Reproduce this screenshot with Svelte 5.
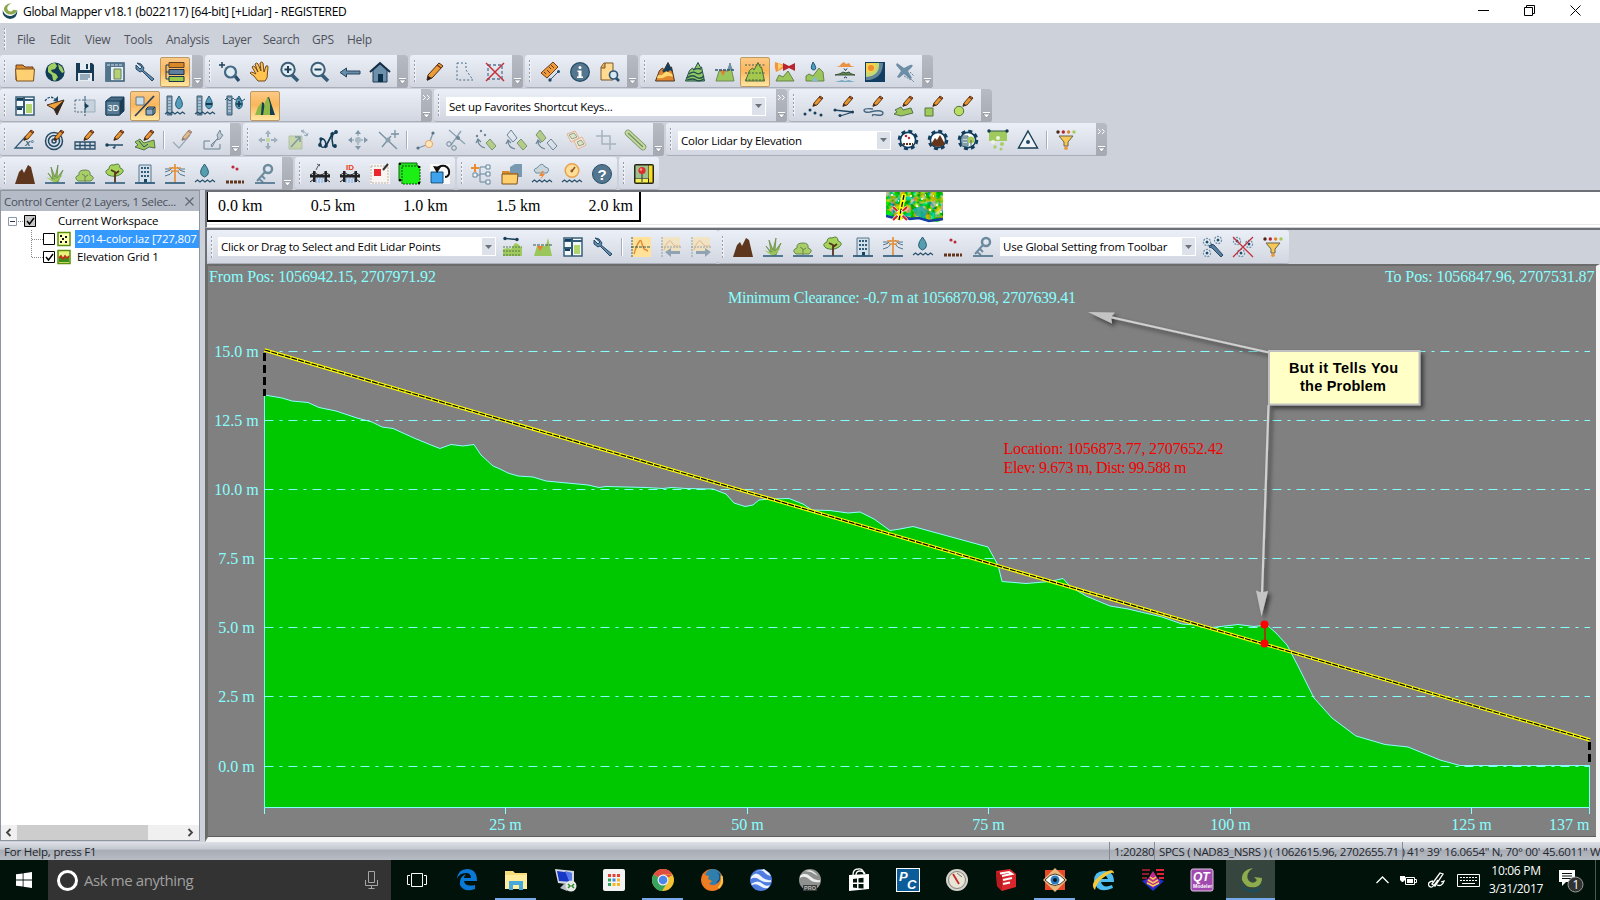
<script lang="ts">
	const pencil =
		'<path d="M9 10l1-3 6-7 3 2-6 7z" fill="#e9962f" stroke="#4b2a14" stroke-width=".9"/><path d="M8.5 11l1.2-3.6 2.6 1.8z" fill="#4b2a14"/><path d="M15 1l3 2.2" stroke="#7c2f1c" stroke-width="1.2"/>';
	const gear =
		'<circle cx="10" cy="10" r="9" fill="none" stroke="#123f5e" stroke-width="2.6" stroke-dasharray="4 3.07"/><circle cx="10" cy="10" r="7.6" fill="#fff" stroke="#123f5e" stroke-width="1.6"/>';
	const bridge =
		'<path d="M6 14h8M5 16h10M5 18h11" stroke="#79aee8" stroke-dasharray="2 1"/><path d="M0 11h20v2.500H0zM3 7h2.500v11H3zM14.500 7H17v11h-2.500z" fill="#222"/><path d="M0 11q3-1 4-3 6 6 12 0 1 2 4 3M0 18l4-3M20 18l-4-3" fill="none" stroke="#222"/>';
	const funnel =
		'<circle cx="2" cy="2" r="1.7" fill="#4b2413"/><circle cx="7.3" cy="2" r="1.7" fill="#b22430"/><circle cx="12.6" cy="2" r="1.7" fill="#e0842c"/><circle cx="18" cy="2" r="1.7" fill="#a6cb53"/><path d="M3 6h14l-5 6v4H8v-4z" fill="#f6c856" stroke="#6d6248"/><circle cx="10" cy="18.3" r="1.8" fill="#ee9536"/>';
	const waves = '<path d="M0 18l2.5-2 2.5 2 2.5-2 2.5 2 2.5-2 2.5 2 2.5-2 2.5 2" fill="none" stroke="#28506c" stroke-width="1.2"/>';
	const ruler = '<path d="M2 0h5v19H2z" fill="#7392a9" stroke="#436379"/><path d="M3 3h3M3 6h3M3 9h3M3 12h3M3 15h3" stroke="#e3edf3"/>';
	const ridge = 'M.500 19L4.500 8.500l3-2.500 1.500 2L13 .500l2.500 5 1-.500L19.500 19z';
	const green = 'fill="#9cc65b" stroke="#56734b"';

	const icons: Record<string, string> = {
		folder: '<path d="M1 3h7l2 2h8v13H1z" fill="#d98a2c" stroke="#6b3d1b"/><path d="M.500 7h19l-1 12h-17z" fill="#ffd071" stroke="#7b5222"/>',
		globe: '<circle cx="10" cy="10" r="9.6" fill="#123b57"/><path d="M3 5q3-4 7-4l2 3-2 3-4 1 1 2 4 2 2 3-3 4-2-1-1-5-4-3zM13 2l4 3 2 5-2 1-3-4z" fill="#a0cf62"/>',
		save: '<path d="M1 1h16l2 2v16H1z" fill="#173b55"/><path d="M5 1h10v7H5zM3 11h14v8H3z" fill="#e6edf2"/><path d="M11 2h2v5h-2z" fill="#173b55"/><path d="M5 13h10M5 15h10M5 17h8" stroke="#456982"/>',
		layout: '<path d="M1 1h18v18H1z" fill="#e9eef2" stroke="#335a75" stroke-width="1.5"/><path d="M1 1h18v4H1zM1 5h5v14H1z" fill="#52758e"/><path d="M2 3h15" stroke="#d9e4eb" stroke-dasharray="3 1"/><path d="M9 7h7v10H9z" fill="#b4d174" stroke="#64806b"/>',
		wrench: '<path d="M2 1l4 1 3 4-1 2 11 9-2 2L7 9 5 10 1 7V3l4 4 2-2z" fill="#638cad" stroke="#244866"/>',
		layers: '<path d="M4 3H1v14h4M1 10h4" fill="none" stroke="#173b56"/><path d="M4 .500h15v5H4z" fill="#d98828" stroke="#624126"/><path d="M4 7.500h15v5H4z" fill="#617f9d" stroke="#17354d"/><path d="M4 14.500h15v5H4z" fill="#9acb4e" stroke="#17354d"/>',
		zoomWin: '<path d="M2 0v6M-1 3h6" stroke="#1b3e56" stroke-width="1.4"/><path d="M15 14l4 5" stroke="#294e6d" stroke-width="3.4"/><circle cx="10.5" cy="10" r="5.5" fill="#dfecf3" stroke="#436983" stroke-width="2.2"/>',
		hand: '<path d="M8 19L4 14 0 11q1-2 4 0l2 1-4-7q1-2 3 0l3 5L5 2q2-2 3 0l3 7-1-8q2-2 3 0l1 9 2-6q2-1 2 1l-1 11-2 3z" fill="#ffc34e" stroke="#704a23"/>',
		zoomIn: '<path d="M12 13l6 6" stroke="#355d7a" stroke-width="3.5"/><circle cx="8" cy="7.5" r="6.7" fill="#e5eef3" stroke="#3d6078" stroke-width="2"/><path d="M4.5 7.5h7M8 4v7" stroke="#1c4059" stroke-width="2"/>',
		zoomOut: '<path d="M12 13l6 6" stroke="#355d7a" stroke-width="3.5"/><circle cx="8" cy="7.5" r="6.7" fill="#e5eef3" stroke="#3d6078" stroke-width="2"/><path d="M4.5 7.5h7" stroke="#1c4059" stroke-width="2"/>',
		back: '<path d="M0 10.500l6.500-4.500v3H20v3H6.500v3z" fill="#668eaa" stroke="#29475e"/>',
		home: '<path d="M3 8l7-6 7 6v12H3z" fill="#6d91ac" stroke="#213d54"/><path d="M0 10l10-9 10 9" fill="none" stroke="#162f46" stroke-width="2"/><path d="M8 12h5v8H8z" fill="#0c3048"/>',
		pencil: '<path d="M2 18l1-5L14 1l4 3L7 16z" fill="#eb9c35" stroke="#4b2a14"/><path d="M2 19l1-5 4 2z" fill="#2d2018"/><path d="M12 3l4 3" stroke="#7c2f1c" stroke-width="1.4"/>',
		selShape: '<path d="M2 1h9v7l7 10H2z" fill="none" stroke="#476b88" stroke-dasharray="2 2"/>',
		selDel: '<path d="M3 3h14v14H3z" fill="none" stroke="#547690" stroke-width="1.300" stroke-dasharray="3 2"/><path d="M1 1l18 18M19 1L1 19" stroke="#c4303c" stroke-width="1.500"/>',
		measure: '<path d="M1 11L13 0l5 5L7 16z" fill="#f09b38" stroke="#683d1d"/><path d="M4 10l2 2M7 8l3 3M9 5l2 2M11 3l3 3" stroke="#5e371d"/><path d="M10 18l9-9" stroke="#315878"/><circle cx="10" cy="18" r="1.7" fill="#244b6b"/><circle cx="18.5" cy="9.5" r="1.5" fill="#244b6b"/>',
		info: '<circle cx="10" cy="10" r="9.3" fill="#54778f" stroke="#254c68" stroke-width="1.3"/><circle cx="10" cy="5.4" r="1.5" fill="#fff"/><path d="M7.5 8.5h4v6h1.5v1.5H7V14.500h1.500V10h-1z" fill="#fff"/>',
		docFind: '<path d="M4 1h9v17H1V5z" fill="#ffda91" stroke="#7b562b"/><path d="M5 1v5H1" fill="#e5a64e" stroke="#7b562b"/><path d="M15 15l4 4" stroke="#294f70" stroke-width="2.6"/><circle cx="13.500" cy="13" r="4" fill="#d8e9f3" stroke="#315878" stroke-width="1.700"/>',
		mtnColor: `<path d="${ridge}" fill="#e0872e" stroke="#4d3524"/><path d="M7 8.500L9 8l4-7.500 2.500 5 1-.500 1 5-2.500-2-2 2-2-1-2 2z" fill="#163e59"/><path d="M3 13q4 1 6-2t8 1l1 3q-5-2-8 0t-8 1z" fill="#ffd66e"/>`,
		mtnContour: `<path d="${ridge}" fill="#91c668" stroke="#204f49"/><path d="M2 16q5-4 9-1t8-1M4 12q4-3 7-1t6-1M8 8q4-2 8-1M2 18q6-2 9 0t8-1" fill="none" stroke="#204f49" stroke-width="1.300"/>`,
		mtnCut: '<path d="M1 19L4 9h9l2-8 4 18z" fill="#9bc65b" stroke="#6f8b5b"/><path d="M12 8l3-7 3 7z" fill="#7192a7"/><path d="M5 8h6l-3 6z" fill="#e17f36"/><path d="M0 8h20" stroke="#2b536e" stroke-width="1.300" stroke-dasharray="3 1"/>',
		mtnProfile: `<path d="${ridge}" fill="#a4c84c" stroke="#486d3b"/><path d="M0 3h20M0 11h20M0 18h20" stroke="#405e4c" stroke-dasharray="2 1.500"/>`,
		viewshed: '<path d="M0 0l9 3v3L1 10q-2-5-1-10z" fill="#f39538"/><path d="M3 1l5 3-5 4z" fill="#ffd371"/><path d="M8 1l6 3 6-3v8l-6-3-6 3z" fill="#b82531"/><path d="M1 19l3-6 4 2 5-6 6 10z" fill="#9cc65b" stroke="#65854a"/>',
		watershed: '<path d="M8 0q5 7 1 8-5 0-1-8z" fill="#4b9bbf" stroke="#255a78"/><path d="M1 19v-5l3-2 4 2 6-8 4 4 1 9z" fill="#9cc65b" stroke="#65854a"/><path d="M7 19l2-4 3 2 1 2z" fill="#82bcd6"/>',
		surfaces: '<path d="M0 5q5 0 6-3l3-2 2 2 3-1 2 3 4 1z" fill="#eb9242"/><path d="M0 13q6-1 8-3l3 1 3-1q1 2 6 3z" fill="#65884d" stroke="#38523d"/><path d="M0 20q4-1 7-2l3 1 4-1q2 1 6 2z" fill="#78a9c0"/><path d="M9 6.500l1.500 2 1.500-2M9 16l1.500-1 1.500 1" fill="none" stroke="#16374e"/>',
		heat: '<path d="M0 0h20v20H0z" fill="#113e62"/><path d="M1 1h17q0 14-13 17H1z" fill="#638599"/><path d="M1 1h13q1 13-13 14z" fill="#c4da72"/><path d="M1 1h9q3 10-9 10z" fill="#f6d34f"/><circle cx="6" cy="6" r="3" fill="#f08b2e"/>',
		plane: '<path d="M2 1l7 5 6-3q4-1 2 2l-4 4 4 7-2 1-6-5-5 4-2-1 4-6-5-6z" fill="#6c8ea6"/><path d="M11 12l8 8M9 14l7 4M15 10l4 4" stroke="#647f93" stroke-dasharray="2 1"/>',
		panels: '<path d="M1 1h18v18H1z" fill="#f3f7fa" stroke="#395f77" stroke-width="1.500"/><path d="M1 4h18M9 1v18M1 11h8" stroke="#315b77" stroke-width="2"/><path d="M11 8h6v9h-6z" fill="#b2d66d"/><path d="M2 2h6v2H2zM2 12h5v2H2z" fill="#153e59"/>',
		flyTo: '<path d="M2 9L19 4l-7 15-3-6z" fill="#f1a33c" stroke="#4b301d"/><path d="M19 4L9 13l3 6z" fill="#322923"/><path d="M0 5q5-7 11-1" fill="none" stroke="#234e6e" stroke-width="1.300" stroke-dasharray="2.500 1.200"/><path d="M8 5l5 1V0z" fill="#234e6e"/>',
		mirror: '<path d="M0 4h10v12H0z" fill="none" stroke="#496b80" stroke-dasharray="2 1.500"/><path d="M10 4h10v12H10z" fill="#c6d3dd" stroke="#9bafbd"/><path d="M10 0v20" stroke="#315b77" stroke-dasharray="5 1"/><path d="M10 7l4 3-4 3z" fill="#173f5b"/>',
		cube3d: '<path d="M1 5l5-4h13v14l-5 4H1z" fill="#466a84" stroke="#143d59"/><path d="M1 5h14v14H1z" fill="#587b93" stroke="#143d59"/><path d="M15 5l4-4v14l-4 4z" fill="#193e57"/><text x="2.500" y="15" font-family="Liberation Sans" font-size="9" fill="#fff">3D</text>',
		switch3d: '<path d="M1 1h8v8H1z" fill="#c9dcea" stroke="#6a7880"/><path d="M19 0L0 20" stroke="#2c435a" stroke-width="1.800"/><path d="M11 13l2-2h7v6l-2 2h-7z" fill="#8fabc1" stroke="#173b55"/><path d="M11 13h7v6M18 13l2-2" fill="none" stroke="#173b55"/>',
		waterSet: ruler + waves + '<path d="M14 0q7 10 0 13-7-3 0-13z" fill="#559cba" stroke="#265d7a"/>',
		waterDown: ruler + waves + '<path d="M14 0q7 10 0 13-7-3 0-13z" fill="#559cba" stroke="#265d7a"/><path d="M11 8h6" stroke="#15364d" stroke-width="2"/>',
		waterUp: ruler + '<path d="M14 0q7 10 0 13-7-3 0-13z" fill="#559cba" stroke="#265d7a"/><path d="M11 8h6M14 5v6" stroke="#15364d" stroke-width="1.600"/><path d="M0 4l2-2 3 3 3-3 2 2 3-2 4 3 3-2" fill="none" stroke="#315b77"/>',
		peaks: '<path d="M4 19L7 6l2 1 3 12zM11 19l1-17 2-1 6 18z" fill="#173e50"/><path d="M0 19l3-8 4-5-1 13zM8 19l2-13 3-5 2 7v11z" fill="#8fb945"/>',
		angle: '<path d="M18 18H0L11 6" fill="none" stroke="#315b77" stroke-width="1.300"/><text x="10" y="16" font-family="Liberation Sans" font-style="italic" font-weight="bold" font-size="8" fill="#315b77">X°</text>' + pencil,
		target: '<g fill="none" stroke="#234a64" stroke-width="1.500"><circle cx="9" cy="11" r="8.500"/><circle cx="9" cy="11" r="5.500"/><circle cx="9" cy="11" r="2"/></g>' + pencil,
		gridDraw: '<path d="M0 12h20v7H0zM0 15.500h20M5 12v7M10 12v7M15 12v7" fill="none" stroke="#294f69" stroke-width="1.300"/>' + pencil,
		segDraw: '<path d="M1 15h17M10 15q0 5-2 2" fill="none" stroke="#294f69" stroke-width="1.400"/><circle cx="2" cy="15" r="1.700" fill="#143c58"/>' + pencil,
		areaMap: `<path d="M0 12l5-3 4 4 10-3 1 8-6-1-5 3-9-3 3-2z" ${green}/><path d="M4 11l5 6 4-3" fill="none" stroke="#28506c"/>` + pencil,
		checkDraw: '<path d="M0 12l6 6 11-13" fill="none" stroke="#6b8190" stroke-width="1.300"/>' + pencil,
		wrenchBox: '<path d="M7 11H1v8h16v-5" fill="none" stroke="#6d8291"/><path d="M8 15l7-7-1-3 3-5 1 4 2 1-3 4-4 1-4 7z" fill="#c1cbd3" stroke="#748b9c"/>',
		move: '<path d="M10 0l3 4h-2v3H9V4H7zM10 20l3-4h-2v-3H9v3H7zM0 10l4-3v2h3v2H4v2zM20 10l-4-3v2h-3v2h3v2z" fill="#6e879a"/><path d="M8 8h4v4H8z" fill="#b6cf70"/>',
		scale: '<path d="M1 6h13v13H1z" fill="#b5ce78" stroke="#92a878"/><path d="M3 17L12 7m-5 0h5v5" fill="none" stroke="#34596d" stroke-width="1.500"/><path d="M13 1q5 0 6 5l-3-1m3 1l1-3M13 1l3-1m-3 1l3 2" fill="none" stroke="#587488"/>',
		vertices: '<path d="M2 15l1-6q4-1 5 5l-1 4 8-16-1 7 1 7 3 1" fill="none" stroke="#173e56" stroke-width="1.600"/><path d="M2 15q2 4 6 1l6-11 5-3" fill="none" stroke="#173e56" stroke-width="1.300"/><g fill="#123b57"><circle cx="2" cy="15" r="1.900"/><circle cx="3" cy="9" r="1.700"/><circle cx="8" cy="16" r="1.800"/><circle cx="14" cy="4" r="1.700"/><circle cx="18" cy="2" r="1.900"/><circle cx="17" cy="16" r="1.900"/></g>',
		moveVertex: '<path d="M10 0l3 4H7zM10 20l3-4H7zM0 10l4-3v6zM20 10l-4-3v6z" fill="#7f97a8"/><path d="M10 4v12M4 10h12" stroke="#7f97a8" stroke-dasharray="2 1"/><circle cx="10" cy="10" r="3" fill="#a9bac6"/>',
		addVertex: '<path d="M1 2l18 17M4 17l9-11M17 0v8M13 4h8" fill="none" stroke="#7890a1" stroke-width="1.300"/><circle cx="10" cy="10" r="2.500" fill="#8ba1b0"/>',
		nodeA: '<path d="M2 18l11-4 4-11" fill="none" stroke="#839aaa" stroke-width="1.300"/><circle cx="2" cy="18" r="1.600" fill="#56758b"/><circle cx="17" cy="3" r="1.600" fill="#56758b"/><circle cx="13" cy="14" r="3.600" fill="#ffe6bc" stroke="#e8a861"/>',
		cut: '<path d="M3 0l16 14M15 1L5 15" stroke="#8da2b0" stroke-width="1.300"/><circle cx="3" cy="14" r="2.300" fill="none" stroke="#6d8798"/><circle cx="8" cy="18" r="2.300" fill="none" stroke="#6d8798"/><circle cx="12" cy="8" r="2" fill="#6d8798"/>',
		rotA: '<circle cx="5" cy="1" r="1.200" fill="#69859a"/><circle cx="1" cy="6" r="1.200" fill="#69859a"/><circle cx="9" cy="5" r="1.200" fill="#69859a"/><path d="M10 13l4-4 6 7-4 4z" fill="#b3cd88" stroke="#7c946f"/><path d="M2 10q0 6 7 8M0 13l2-4 3 3" fill="none" stroke="#6d8798" stroke-width="1.300"/>',
		rotB: '<path d="M1 5l4-5 6 8-4 4z" fill="none" stroke="#69859a"/><path d="M11 13l4-4 6 7-4 4z" fill="#b3cd88" stroke="#7c946f"/><path d="M2 11q0 6 7 8M0 14l2-4 3 3" fill="none" stroke="#6d8798" stroke-width="1.300"/>',
		rotC: '<path d="M0 5l4-5 6 8-4 4z" fill="#b3cd88" stroke="#7c946f"/><path d="M11 13l4-4 6 7-4 4z" fill="none" stroke="#69859a"/><path d="M2 11q0 6 7 8M0 14l2-4 3 3" fill="none" stroke="#6d8798" stroke-width="1.300"/>',
		copyShapes: '<path d="M1 4l8-3 4 7-8 4zM8 11l8-4 4 8-8 4z" fill="#f5e8df" stroke="#e4b391"/><path d="M3 5l5-2 3 4-5 2zM11 12l4-2 3 4-5 2z" fill="#dce5cb" stroke="#8ca284"/>',
		crop: '<path d="M6 0v14h14M0 6h14v14" fill="none" stroke="#a7b4bf" stroke-width="1.500"/>',
		rod: '<path d="M2 3l15 14" stroke="#81966d" stroke-width="6.500" stroke-linecap="round"/><path d="M2 3l15 14" stroke="#c4dca0" stroke-width="5" stroke-linecap="round"/><path d="M2 3l15 14" stroke="#7a9362" stroke-width="1.500"/>',
		pointsDraw: '<circle cx="1" cy="18" r="1.500" fill="#173d57"/><circle cx="6" cy="14" r="1.500" fill="#173d57"/><circle cx="11" cy="17" r="1.500" fill="#173d57"/><circle cx="17" cy="19" r="1.500" fill="#173d57"/>' + pencil,
		lineDraw: '<path d="M0 14l19 2L6 20" fill="none" stroke="#214865" stroke-width="1.300"/><circle cx="1" cy="14" r="1.500" fill="#173d57"/><circle cx="6" cy="19.500" r="1.500" fill="#173d57"/><circle cx="18.500" cy="16" r="1.500" fill="#173d57"/>' + pencil,
		freeDraw: '<path d="M9 13q-8-1-9 1 0 3 6 2 12-3 13 1 0 3-6 2-6-1-4 1" fill="none" stroke="#476982" stroke-width="1.400"/>' + pencil,
		areaDraw: `<path d="M1 14l6-3 2 3 8-2 2 5-12 3-7-2 3-2z" ${green}/>` + pencil,
		rectDraw: '<path d="M1 12h8v8H1z" fill="#9ecb5b" stroke="#567445"/>' + pencil,
		circleDraw: '<circle cx="5" cy="15" r="4.700" fill="#b9de62" stroke="#51743f"/>' + pencil,
		gearDots: gear + '<circle cx="8" cy="6" r="1.300" fill="#b92836"/><circle cx="11" cy="8" r="1.200" fill="#b92836"/><path d="M5 14h10" stroke="#643018" stroke-width="2" stroke-dasharray="2 1"/>',
		gearMtn: gear + '<path d="M3 14l4-6 2 2 3-5 5 9q-7 6-14 0z" fill="#64351b"/>',
		gearCity: gear + '<path d="M4 6h6v10H4z" fill="#c5d7e2" stroke="#456b7d"/><circle cx="13" cy="10" r="3.500" fill="#a9cc59"/><path d="M13 10v6M5 8h4M5 11h4M5 14h4" stroke="#47636d"/>',
		gridPts: '<path d="M1 1h18v10H1z" fill="#9fca5e"/><path d="M1 1h18" stroke="#315944"/><circle cx="1" cy="1" r="1.700" fill="#143c4d"/><circle cx="19" cy="1" r="1.700" fill="#143c4d"/><circle cx="5" cy="12" r="2" fill="#eff5dd"/><circle cx="10" cy="8" r="2" fill="#eff5dd"/><circle cx="7" cy="17" r="1.700" fill="#a8cd6a"/><circle cx="14" cy="14" r="2" fill="#a8cd6a"/><circle cx="13" cy="19" r="1.500" fill="#a8cd6a"/>',
		tri: '<path d="M10 1l9.500 17H.5z" fill="#edf3f7" stroke="#173d57" stroke-width="1.400"/><circle cx="10" cy="12" r="2" fill="#204966"/>',
		funnel,
		ground: '<path d="M0 20L4 8l3-3 2 4 4-8 3 2 4 17z" fill="#5e351d"/>',
		grass: '<path d="M9 18L3 9l5 6L6 3l4 10 3-12-1 13 6-8-5 12z" fill="#8dbb50" stroke="#60853f" stroke-width=".7"/><path d="M8 18l-7-5 8 3 9-5-7 7z" fill="#9bc65d"/><path d="M0 19h20" stroke="#315f7c" stroke-width="1.600"/>',
		bush: '<path d="M3 17q-5-4 1-6-1-5 6-5 6 0 5 5 6 2 1 6z" fill="#a9cd67" stroke="#66894f"/><path d="M10 18v-6l-3-2m3 3l3-2" stroke="#69864f" fill="none"/><path d="M0 19h20" stroke="#315f7c" stroke-width="1.600"/>',
		tree: '<path d="M3 11q-5-4 1-6 0-5 5-4 6-3 6 3 6 2 1 6-6 4-13 1z" fill="#a6d45a" stroke="#557f43"/><path d="M10 19V8l-4-2m4 4l4-3" stroke="#54331e" stroke-width="1.800" fill="none"/><path d="M0 19h20" stroke="#315f7c" stroke-width="1.600"/>',
		building: '<path d="M4 1h12v18H4z" fill="#d4e1ea" stroke="#57768c"/><path d="M6 4h8M6 8h8M6 12h8" stroke="#355c77" stroke-width="2" stroke-dasharray="2 1"/><path d="M9 15h3v4H9z" fill="#164562"/><path d="M0 19h20" stroke="#315f7c" stroke-width="1.800"/>',
		pole: '<path d="M0 8q6-1 8-5M20 8q-6-1-8-5M0 12q6-1 8-5M20 12q-6-1-8-5M0 5h6M14 5h6" fill="none" stroke="#51798e"/><path d="M10 0v19M4 4h12M6 7h8" stroke="#e59138" stroke-width="1.700"/><path d="M0 19h20" stroke="#315f7c" stroke-width="1.700"/>',
		drop: waves + '<path d="M9.500 0q8 10 0 13-8-3 0-13z" fill="#589dae" stroke="#286277"/>',
		dots: '<circle cx="8" cy="3" r="1.600" fill="#bc2937"/><circle cx="12" cy="5" r="1.500" fill="#bc2937"/><path d="M1 18h18" stroke="#62351f" stroke-width="2.800" stroke-dasharray="3 1"/>',
		key: '<circle cx="13" cy="5" r="4" fill="none" stroke="#6c8b9f" stroke-width="2.500"/><path d="M10 8l-8 9m2-2l4 3m-1-6l3 3" stroke="#6c8b9f" stroke-width="2" fill="none"/><path d="M0 19h20" stroke="#315f7c" stroke-width="1.400"/>',
		bridgeEdit: bridge + '<path d="M6 6l2-4 2-2M7 0l3 2" stroke="#555" fill="none"/>',
		bridgeId: bridge + '<text x="6" y="6" font-family="Liberation Sans" font-weight="bold" font-size="8" fill="#e83c1b">ID</text>',
		redSel: '<path d="M0 0h20v20H0z" fill="#f7f4f1"/><path d="M1 2h17v17H1z" fill="none" stroke="#b8b1a8" stroke-dasharray="2 1"/><path d="M4 5h7v7H4z" fill="#e8272f"/><path d="M13 6l5-6" stroke="#333" stroke-width="2"/>',
		greenSel: '<path d="M-1-1h18v18H-1z" fill="#22e61c" stroke="#0a640a"/><path d="M2 2h18v18H2z" fill="#1bef14" stroke="#174a14" stroke-dasharray="2 1"/><path d="M-1-1h2v2h-2zM18 2h2v2h-2zM-1 15h2v2h-2zM18 18h2v2h-2z" fill="#000"/>',
		undoBlue: '<path d="M0 0h20v20H0z" fill="#fafafa"/><path d="M1 8h12v11H1z" fill="#3ea2ed" stroke="#124c76"/><path d="M6 6q3-5 9-4 5 2 4 8-1 3-4 3" fill="none" stroke="#111" stroke-width="2"/><path d="M3 2l8 1-4 6z" fill="#111"/>',
		tree3: '<path d="M3 0v8M-1 4h8" stroke="#ec8b30" stroke-width="2"/><path d="M3 11h5M8 3h8M8 10h8M8 18h8M8 3v15" stroke="#66859b" fill="none"/><path d="M14 1h4v4h-4zM14 8h4v4h-4zM14 16h4v4h-4zM1 9h4v4H1z" fill="#eef4f8" stroke="#66859b"/>',
		folders: '<path d="M8 3l5-3h7v13H8z" fill="#7899b0"/><path d="M0 7h7l2 2h6v11H0z" fill="#d98a2c"/><path d="M0 10h16l-1 10H0z" fill="#ffce6d" stroke="#7b5222"/>',
		storm: '<path d="M4 9q-4-4 1-5 5-7 8-1 6 1 2 6z" fill="#c9d5dc" stroke="#6f8e9f"/><path d="M10 7l-3 5h3l-2 4 5-6h-3l2-3z" fill="#ed8937"/>' + waves,
		gauge: '<circle cx="10" cy="6.500" r="6.800" fill="#ffdf98" stroke="#e8a14d" stroke-width="1.500"/><path d="M10 7l3-4" stroke="#8b572b" stroke-width="1.500"/><circle cx="9.800" cy="7" r="1.400" fill="#8b572b"/>' + waves,
		help: '<circle cx="10" cy="10" r="9.500" fill="#53758d" stroke="#284f6b"/><text x="5.500" y="15.500" font-family="Liberation Sans" font-weight="bold" font-size="15" fill="#fff">?</text>',
		pin: '<rect width="20" height="20" rx="2" fill="#272713"/><path d="M1.500 1.500h13v13h-13z" fill="#9ec08f"/><path d="M15 1.500h3.500v17H15z" fill="#f5dc22"/><path d="M1.500 15H14v3.500H1.500z" fill="#f3ef55"/><path d="M8 9v9" stroke="#333"/><circle cx="8" cy="6.500" r="3.600" fill="#dc2e2b"/><circle cx="7" cy="5.500" r="1.200" fill="#ff9b8e"/>',
		pathProfile: '<path d="M0 19V12l5-1 3 1 4-6 3 1 4 4v8z" fill="#a0ca5b"/><path d="M0 10h19M0 14h18M0 18h18" stroke="#53764d" stroke-dasharray="2 1"/><path d="M2 1.500l12 1" stroke="#173d57" stroke-width="1.300"/><circle cx="2" cy="1.500" r="1.700" fill="#173d57"/><circle cx="14" cy="2.500" r="1.700" fill="#173d57"/>',
		cutSmall: '<path d="M1 19L4 9h9l2-8 4 18z" fill="#9bc65b"/><path d="M4 9h6l-3 5z" fill="#e68131"/><path d="M0 8h20" stroke="#36594d" stroke-dasharray="3 1"/>',
		graph: '<path d="M1 0h19v20H1z" fill="#ffe19a"/><path d="M1 0v20" stroke="#48626a" stroke-dasharray="2 1"/><path d="M3 17q3-10 5-12 2-4 3 2l2 5 4 2" fill="none" stroke="#e28a32" stroke-width="1.400"/><path d="M0 10h20" stroke="#36594d" stroke-dasharray="3 1"/>',
		graphPrev: '<g opacity=".5"><path d="M1 0h18v14H1z" fill="#ffe19a"/><path d="M1 0v20M0 10h20" stroke="#48626a" stroke-dasharray="2 1"/><path d="M3 13q5-14 8-7l3 3h5" fill="none" stroke="#e28a32"/></g><path d="M4 15l6-4v3h9v3h-9v3z" fill="#91a3b2"/>',
		graphNext: '<g opacity=".5"><path d="M1 0h18v14H1z" fill="#ffe19a"/><path d="M1 0v20M0 10h20" stroke="#48626a" stroke-dasharray="2 1"/><path d="M3 13q5-14 8-7l3 3h5" fill="none" stroke="#e28a32"/></g><path d="M20 15l-6-4v3H5v3h9v3z" fill="#91a3b2"/>',
		gearsFix: '<g fill="#eef4f8" stroke="#6f8fa8" stroke-width="1.300" stroke-dasharray="2 1"><circle cx="4" cy="5" r="3.500"/><circle cx="15" cy="3" r="3.500"/><circle cx="4" cy="16" r="3.500"/></g><circle cx="4" cy="5" r="1.500" fill="#204c70"/><circle cx="15" cy="3" r="1.500" fill="#204c70"/><circle cx="4" cy="16" r="1.500" fill="#204c70"/><path d="M8 7l3 1 9 10-2 2-9-9-3-1 1-2 2 1z" fill="#58809e" stroke="#254b69"/>',
		gearsDel: '<g fill="#eef4f8" stroke="#6f8fa8" stroke-width="1.300" stroke-dasharray="2 1"><circle cx="4" cy="4" r="3.500"/><circle cx="16" cy="7" r="3.500"/><circle cx="8" cy="16" r="3.500"/></g><circle cx="4" cy="4" r="1.500" fill="#204c70"/><circle cx="16" cy="7" r="1.500" fill="#204c70"/><circle cx="8" cy="16" r="1.500" fill="#204c70"/><path d="M0 0l20 20M20 0L0 20" stroke="#c22f3d" stroke-width="1.300"/>'
	};

	const lidarClasses = ['ground', 'grass', 'bush', 'tree', 'building', 'pole', 'drop', 'dots', 'key'];

	type Group = {
		items: string[];
		on?: string[];
		combo?: string;
		comboWidth?: number;
		width?: number;
		end?: 'more' | 'both' | 'none';
	};

	const rows: Group[][] = [
		[
			{ items: ['folder', 'globe', 'save', 'layout', 'wrench', 'layers'], on: ['layers'] },
			{ items: ['zoomWin', 'hand', 'zoomIn', 'zoomOut', 'back', 'home'] },
			{ items: ['pencil', 'selShape', 'selDel'] },
			{ items: ['measure', 'info', 'docFind'] },
			{
				items: ['mtnColor', 'mtnContour', 'mtnCut', 'mtnProfile', 'viewshed', 'watershed', 'surfaces', 'heat', 'plane'],
				on: ['mtnProfile']
			}
		],
		[
			{
				items: ['panels', 'flyTo', 'mirror', 'cube3d', 'switch3d', 'waterSet', 'waterDown', 'waterUp', 'peaks'],
				on: ['switch3d', 'peaks'],
				width: 432,
				end: 'both'
			},
			{ items: [], combo: 'Set up Favorites Shortcut Keys...', comboWidth: 320, width: 353, end: 'both' },
			{ items: ['pointsDraw', 'lineDraw', 'freeDraw', 'areaDraw', 'rectDraw', 'circleDraw'] }
		],
		[
			{ items: ['angle', 'target', 'gridDraw', 'segDraw', 'areaMap', '|', '~checkDraw', 'wrenchBox'] },
			{
				items: ['~move', '~scale', 'vertices', 'moveVertex', 'addVertex', '|', 'nodeA', 'cut', 'rotA', 'rotB', 'rotC', 'copyShapes', 'crop', 'rod']
			},
			{
				items: ['gearDots', 'gearMtn', 'gearCity', 'gridPts', 'tri', '|', 'funnel'],
				combo: 'Color Lidar by Elevation',
				comboWidth: 213,
				width: 441,
				end: 'both'
			}
		],
		[
			{ items: lidarClasses },
			{ items: ['bridgeEdit', 'bridgeId', 'redSel', 'greenSel', 'undoBlue'], end: 'none' },
			{ items: ['tree3', 'folders', 'storm', 'gauge', 'help'], end: 'none' },
			{ items: ['pin'], end: 'none' }
		]
	];

	const menus = ['File', 'Edit', 'View', 'Tools', 'Analysis', 'Layer', 'Search', 'GPS', 'Help'];

	const levels = [
		{ y: 351.5, label: '15.0 m' },
		{ y: 420.5, label: '12.5 m' },
		{ y: 489.5, label: '10.0 m' },
		{ y: 558.5, label: '7.5 m' },
		{ y: 627.5, label: '5.0 m' },
		{ y: 696.5, label: '2.5 m' },
		{ y: 766.5, label: '0.0 m' }
	];
	const ticks = [
		{ x: 505.5, label: '25 m' },
		{ x: 747.5, label: '50 m' },
		{ x: 988.5, label: '75 m' },
		{ x: 1230.5, label: '100 m' },
		{ x: 1471.5, label: '125 m' }
	];
	const terrain =
		'264.5,395 282,398 292,401 308,402.500 319,407.500 336,411 357,418 372,422 382,427 393,428.500 414,438 431,445 440,448.500 451,444.500 463,446 474,444.500 481,455 493,466 500,469 508,473 518,476 533,477 546,481 567,483 588,485 599,487.500 606,486.500 646,487.500 663,488.500 671,487.500 686,488.500 713,489 726,494 734,503 745,506.500 753,505 759,500 770,499 789,498.500 803,504 812,510 830,510.500 848,513 860,512 874,519 890,530.500 900,529 913,526.500 988,547 998,565 1002,581.500 1026,583.500 1050,581.500 1063,578.500 1071,587 1086,596 1110,606 1128,609 1162,617 1182,624 1196,625 1212,627.500 1238,624.500 1254,626.500 1267,625 1276,633 1287,645 1298,666 1314,698 1332,718 1356,736 1385,744.500 1408,747 1440,760 1460,765.500 1589.500,765.500';

	const apps: { svg: string; state?: string }[] = [
		{ svg: '<path d="M2 11Q3 1 12 1q10 0 10 12H9q1 6 11 4v4Q9 25 5 17q-1-8 6-11-2 2-2 4h7q0-5-5-5-7 0-9 6z" fill="#0a78d6"/>' },
		{ svg: '<path d="M1 3h8l2 2h12v16H1z" fill="#f6dc7b"/><path d="M1 7h22v14H1z" fill="#ffec9d"/><path d="M5 13h14v9h-4v-5H9v5H5z" fill="#45a9dc"/>', state: 'open' },
		{ svg: '<path d="M2 1l19 2v14L5 15z" fill="#d3d7df"/><path d="M4 3l15 2v9L6 13z" fill="#1738c5"/><path d="M12 3l7 2v9l-3-1z" fill="#557bea"/><path d="M7 20l5-5 6 4-4 4z" fill="#b7bcc7"/><circle cx="18" cy="18" r="5.500" fill="#e6eae6"/><path d="M15 16l2 2-2 2M21 16l-2 2 2 2" stroke="#308a2e" fill="none" stroke-width="1.500"/>' },
		{ svg: '<rect x="1" y="1" width="22" height="22" rx="2" fill="#f3f3f3"/><path d="M6 6h3v3H6zM10.500 6h3v3h-3z" fill="#e34334"/><path d="M15 6h3v3h-3z" fill="#e34334"/><path d="M6 10.500h3v3H6z" fill="#2ca35b"/><path d="M10.500 10.500h3v3h-3z" fill="#4385e9"/><path d="M15 10.500h3v3h-3z" fill="#f5b824"/><path d="M6 15h3v3H6z" fill="#2ca35b"/><path d="M10.500 15h3v3h-3zM15 15h3v3h-3z" fill="#f5b824"/>' },
		{ svg: '<circle cx="12" cy="12" r="11" fill="#f3c334"/><path d="M12 12L2.500 6.500A11 11 0 0 1 21.500 6.500H12z" fill="#de4d40"/><path d="M12 12L2.500 6.500A11 11 0 0 0 11 23l5-8z" fill="#38a35a"/><path d="M12 7h9.700L12 12z" fill="#de4d40"/><circle cx="12" cy="12" r="5.500" fill="#eee"/><circle cx="12" cy="12" r="4.300" fill="#4b86ed"/>', state: 'open' },
		{ svg: '<circle cx="12" cy="12" r="11" fill="#e77021"/><circle cx="13" cy="9" r="8" fill="#2f7fae"/><path d="M15 2q5 3 4 9l-3 4 4-1q1-5 0-8z" fill="#1a4f86"/><path d="M3 5l2 2 4 1-1 3 4 2-3 3q4 3 8 0 4-3 4-10 5 9-1 14-7 5-15 0-5-6-2-15z" fill="#ef7d22"/><path d="M21.500 8q2 7-3 12" stroke="#f8c54b" fill="none" stroke-width="2"/>' },
		{ svg: '<circle cx="12" cy="12" r="11" fill="#4e7ce0"/><path d="M2 9q5-7 11 0 4 4 9 3v2q-7 1-11-2-5-4-9-1zM2 16q7-5 12 0 3 3 7 1l-2 3q-4 1-8-2-4-3-8-1zM7 4q5-4 9 1 3 3 6 3l-2-3-5-4z" fill="#edf3ff"/>' },
		{ svg: '<circle cx="12" cy="12" r="11" fill="#8f9191"/><path d="M2 8q5-5 11 1 4 4 9 3v2q-7 1-11-3-5-4-9-1zM7 3q7-3 13 5L13 4z" fill="#eee"/><path d="M5 17h14v6H5z" fill="#3b3d3d"/><text x="6" y="22" font-size="5.500" font-family="Liberation Sans" font-weight="bold" fill="#bbb">PRO</text>' },
		{ svg: '<path d="M2 7l20-1v15l-20 2z" fill="#fff"/><path d="M6 7q0-6 5-6 5-1 6 5M9 7q0-4 4-4 4 0 5 3" fill="none" stroke="#fff" stroke-width="1.300"/><path d="M6 11l4-.5v4H6zM11.500 10.300l5-.500V14.500h-5zM6 16h4v4l-4-.5zM11.500 16h5v4.500l-5-.3z" fill="#00120a"/>' },
		{ svg: '<rect x=".5" y=".5" width="23" height="23" fill="#0b5d9a" stroke="#fff"/><text x="3" y="13" font-size="13" font-family="Liberation Sans" font-weight="bold" font-style="italic" fill="#fff">P</text><text x="11" y="21" font-size="13" font-family="Liberation Sans" font-weight="bold" font-style="italic" fill="#fff">C</text>' },
		{ svg: '<circle cx="12" cy="12" r="11" fill="#d4d3cf"/><circle cx="12" cy="12" r="8.500" fill="#e9e4d8" stroke="#8b8477"/><path d="M8 6l6 10" stroke="#c12d22" stroke-width="1.800"/><path d="M12 5l5 4" stroke="#776"/>' },
		{ svg: '<path d="M2 3l14-2 6 5v13L8 23l-5-5z" fill="#d9262c"/><path d="M2 3l6 4v16l-5-5z" fill="#b81a20"/><path d="M6 5.500l9-1.500 3 2-10 2M9 12l9-2M9 16l7-1.500" fill="none" stroke="#fff" stroke-width="2"/>' },
		{ svg: '<path d="M2 2h20v20H2z" fill="#e84a27"/><path d="M12 0l12 12-12 12L0 12z" fill="#e7b77b"/><path d="M2 12q10-12 20 0-10 11-20 0z" fill="#fff" stroke="#4f3521"/><circle cx="12" cy="12" r="4.500" fill="#287cc2"/><circle cx="12" cy="12" r="2" fill="#071722"/>', state: 'open' },
		{ svg: '<path d="M2 13Q2 3 12 3q10 0 10 11H9q2 7 11 3l1 3Q5 27 2 13zm7-2h7q-3-7-7 0z" fill="#4ebdf0"/><path d="M3 22Q-4 15 12 5q10-6 10 1-1-3-7 1Q4 14 3 22z" fill="#f4c839"/>' },
		{ svg: '<path d="M1 1h8v2H1zM1 5h7v2H1zM1 9h5v2H1z" fill="#911b2e"/><path d="M15 1h8v2h-8zM16 5h7v2h-7zM18 9h5v2h-5z" fill="#e0223a"/><path d="M1 13l11 10 11-10-5-2H6z" fill="#2030ca"/><path d="M12 3l7 11-7 6-7-6z" fill="#bf2a91"/><path d="M9 9l3 2 3-2M7 12l5 3 5-3M6 15l6 3 6-3" fill="none" stroke="#f5d353" stroke-width="1.500"/>' },
		{ svg: '<rect x="1" y="1" width="22" height="22" rx="2" fill="#a14aaf" stroke="#e3c8e8"/><text x="3" y="13" font-size="12" font-family="Liberation Sans" font-weight="bold" font-style="italic" fill="#fff">QT</text><text x="3" y="20" font-size="5" font-family="Liberation Sans" font-weight="bold" fill="#fff">Modeler</text>' },
		{ svg: '<path d="M14 0Q2 2 3 12q4 9 14 7 6-2 6-9l-8-1 3 3q-3 5-8 1-5-7 4-13z" fill="#8dac4d"/><path d="M1 14q4 9 14 8 6-1 8-6-1 9-11 8Q3 23 1 14z" fill="#174f65"/>', state: 'open active' }
	];
</script>

{#snippet icon(name: string)}
	<svg class="icon" class:dim={name.startsWith('~')} viewBox="0 0 20 20">{@html icons[name.replace('~', '')]}</svg>
{/snippet}

{#snippet combo(text: string, width: number)}
	<div class="combo" style:width="{width}px">
		<span>{text}</span>
		<i><svg width="7" height="4"><path d="M0 0h7L3.500 4z" fill="#6c727c" /></svg></i>
	</div>
{/snippet}

{#snippet buttons(items: string[], on: string[] = [])}
	{#each items as item}
		{#if item === '|'}
			<span class="sep"></span>
		{:else}
			<span class="btn" class:on={on.includes(item)}>{@render icon(item)}</span>
		{/if}
	{/each}
{/snippet}

<div class="window">
	<header class="titlebar">
		<svg class="logo" viewBox="0 0 24 24"><path d="M14 0Q2 2 3 11q4 8 13 6 6-2 7-6l-6-1q-4 5-8 1-4-5 5-11z" fill="#8aa84b" /><path d="M1 11q4 10 14 8 6-2 8-7 0 11-11 12Q0 22 1 11z" fill="#17475c" /></svg>
		<span class="title">Global Mapper v18.1 (b022117) [64-bit] [+Lidar] - REGISTERED</span>
		<div class="controls">
			<svg width="11" height="11"><path d="M0 5.500h11" stroke="#000" /></svg>
			<svg width="11" height="11"><path d="M.5 2.500h8v8h-8zM2.500 2.500v-2h8v8h-2" fill="none" stroke="#000" /></svg>
			<svg width="11" height="11"><path d="M.5.5l10 10M10.500.5l-10 10" stroke="#000" /></svg>
		</div>
	</header>

	<nav class="menubar">
		<span class="grip"></span>
		{#each menus as menu}
			<span>{menu}</span>
		{/each}
	</nav>

	<div class="toolbars">
		{#each rows as row}
			<div class="row">
				{#each row as group}
					<div class="group" style:width={group.width ? `${group.width}px` : undefined}>
						<span class="grip"></span>
						{#if group.combo}
							{@render combo(group.combo, group.comboWidth ?? 200)}
						{/if}
						{@render buttons(group.items, group.on)}
						{#if group.end !== 'none'}
							<span class="more">
								<svg width="7" height="6">{#if group.end === 'both'}<path d="M0 0l2.500 2.500L0 5M4 0l2.500 2.500L4 5" fill="none" stroke="#fff" />{/if}</svg>
								<svg width="8" height="7"><path d="M0 .5h7" stroke="#fff" /><path d="M0 2h7L3.500 6z" fill="#fff" stroke="#777d87" stroke-width=".6" /></svg>
							</span>
						{/if}
					</div>
				{/each}
			</div>
		{/each}
	</div>

	<main>
		<aside>
			<div class="panel-title">
				<span>Control Center (2 Layers, 1 Selec...</span>
				<svg width="9" height="9"><path d="M.5.5l8 8M8.500.5l-8 8" stroke="#626871" stroke-width="1.200" /></svg>
			</div>
			<div class="tree">
				<div class="node root">
					<svg width="30" height="18"><path d="M.5 5.500h8v8h-8z" fill="#fff" stroke="#8a98ab" /><path d="M2 9.500h5" stroke="#335" /><path d="M10 9.500h7" stroke="#888" stroke-dasharray="1 1" /><path d="M16.500 3.500h11v11h-11z" fill="#c8c8c8" stroke="#000" /><path d="M19 9l2.500 3 4.500-6" fill="none" stroke="#000" stroke-width="1.500" /></svg>
					<span>Current Workspace</span>
				</div>
				<div class="node">
					<svg width="40" height="18"><path d="M.5 0v18M1 9.500h11" stroke="#888" stroke-dasharray="1 1" /><path d="M12.500 3.500h11v11h-11z" fill="#fff" stroke="#000" /><path d="M27 2.500h12v13H27z" fill="#ffffb5" stroke="#5b8f0b" stroke-width="1.500" /><path d="M29 5h2v2h-2zM34 6h2v2h-2zM31 8h2v2h-2zM29 11h2v2h-2zM34 11h2v2h-2z" fill="#12122a" /></svg>
					<span class="selected">2014-color.laz [727,807</span>
				</div>
				<div class="node">
					<svg width="40" height="18"><path d="M.5 0v10M1 9.500h11" stroke="#888" stroke-dasharray="1 1" /><path d="M12.500 3.500h11v11h-11z" fill="#fff" stroke="#000" /><path d="M15 9l2.500 3 4.500-6" fill="none" stroke="#000" stroke-width="1.500" /><path d="M27 2.500h12v13H27z" fill="#eaf27e" stroke="#5b8f0b" stroke-width="1.500" /><path d="M28 14V9l2-2 2 3 2-3 2 3 2-2v6z" fill="#3c8d1d" /><path d="M28 10l2-2 2 3 2-3 2 2 2-2" fill="none" stroke="#c92d1c" stroke-width="1.500" /></svg>
					<span>Elevation Grid 1</span>
				</div>
			</div>
			<div class="hscroll">
				<svg width="16" height="15"><path d="M9.500 4L6 7.500l3.500 3.500" fill="none" stroke="#444" stroke-width="1.800" /></svg>
				<b></b>
				<svg width="17" height="15"><path d="M6.500 4L10 7.500 6.500 11" fill="none" stroke="#444" stroke-width="1.800" /></svg>
			</div>
		</aside>

		<section class="views">
			<div class="map">
				<div class="scalebar">
					{#each ['0.0 km', '0.5 km', '1.0 km', '1.5 km', '2.0 km'] as km}
						<span>{km}</span>
					{/each}
				</div>
				<svg class="thumb" width="58" height="31">
					<defs>
						<filter id="noise" x="0" y="0" width="1" height="1">
							<feTurbulence type="fractalNoise" baseFrequency=".2" numOctaves="2" seed="4" />
							<feColorMatrix values="2.200 0 0 0 -.9  0 1 0 0 .02  0 0 1.500 0 -.72  0 0 0 0 1" />
							<feComposite in2="SourceGraphic" operator="in" />
						</filter>
					</defs>
					<path d="M0 0h57v28l-6 2-10-1-8-2-10-1-6 1-6-3-5 1-6-1z" fill="#378321" filter="url(#noise)" />
					<path d="M0 24l8 2 8-2 8 3 9-1 10 3 14-2" fill="none" stroke="#153ba4" stroke-width="2.500" />
					<path d="M27 17l8-3 7 5-3 6-9-1z" fill="#17a8a2" opacity=".8" />
					<path d="M5 3h2M12 9h1M24 4h2M35 7h2M47 4h1M50 13h2M30 14h2M43 18h2M7 15h2M39 3h1M54 20h2" stroke="#fff" stroke-width="1.500" />
					<path d="M18 2l-5 26" stroke="#ff0" stroke-width="4.500" />
					<path d="M18 3l-5 25" stroke="#000" stroke-width="1.300" stroke-dasharray="5 2" />
					<path d="M7 15l14 13M21 15L7 28" stroke="#fff" stroke-width="3" stroke-dasharray="7 5" />
					<path d="M7 15l14 13M21 15L7 28" stroke="#d8201c" stroke-width="2" stroke-dasharray="6 7" />
				</svg>
			</div>

			<div class="profile-bar">
				<div class="group first">
					<span class="grip"></span>
					{@render combo('Click or Drag to Select and Edit Lidar Points', 278)}
					{@render buttons(['pathProfile', 'cutSmall', 'panels', 'wrench', '|', 'graph', 'graphPrev', 'graphNext'])}
				</div>
				<div class="group second">
					<span class="grip"></span>
					{@render buttons(lidarClasses)}
					{@render combo('Use Global Setting from Toolbar', 196)}
					{@render buttons(['gearsFix', 'gearsDel', 'funnel'])}
				</div>
			</div>

			<div class="chart">
				<svg viewBox="208 266 1388 570" width="1388" height="570">
					<defs>
						<filter id="drop" x="-20%" y="-20%" width="150%" height="150%">
							<feDropShadow dx="3" dy="3" stdDeviation="2" flood-opacity=".55" />
						</filter>
					</defs>
					<polygon points="{terrain} 1589.500,807.500 264.500,807.500" fill="#00c800" stroke="#8ff" />
					{#each levels as level}
						<path d="M264.500 {level.y}H1590" class="gridline" />
						<text class="cy" x="236.500" y={level.y + 5.5} text-anchor="middle">{level.label}</text>
					{/each}
					{#each ticks as tick}
						<path d="M{tick.x} 808v6" stroke="#8ff" />
						<text class="cy" x={tick.x} y="830" text-anchor="middle">{tick.label}</text>
					{/each}
					<path d="M264.500 808v6M1589.500 808v6" stroke="#8ff" />
					<text class="cy" x="1589.500" y="830" text-anchor="end">137 m</text>
					<text class="cy" x="209" y="282" textLength="227">From Pos: 1056942.15, 2707971.92</text>
					<text class="cy" x="1385" y="282" textLength="209.500">To Pos: 1056847.96, 2707531.87</text>
					<text class="cy" x="728" y="303" textLength="348">Minimum Clearance: -0.7 m at 1056870.98, 2707639.41</text>
					<path d="M264.500 353v43M1589.500 742v24" stroke="#000" stroke-width="3" stroke-dasharray="8 4" />
					<path d="M264.500 350L1590 740" stroke="#ff0" stroke-width="3.400" />
					<path d="M264.500 350L1590 740" stroke="#000" stroke-width="1.200" stroke-dasharray="6 1" />
					<text class="red" x="1003.500" y="454" textLength="220">Location: 1056873.77, 2707652.42</text>
					<text class="red" x="1003.500" y="473" textLength="183">Elev: 9.673 m, Dist: 99.588 m</text>
					<path d="M1265 624v20" stroke="#c81414" stroke-width="1.500" />
					<circle cx="1264.500" cy="624.500" r="4" fill="#f00" />
					<circle cx="1264.500" cy="643.500" r="4" fill="#f00" />
					<g filter="url(#drop)">
						<path d="M1269 352.500L1110 317M1268.500 405L1262 595" stroke="#d0d0d0" stroke-width="2.200" />
						<path d="M1088 312l27 .5-4 4.500 1 6.500z" fill="#c4c4c4" />
						<path d="M1261.500 616.500l-5.500-26 5.500 2 6.500-1.500z" fill="#c4c4c4" />
						<rect x="1269" y="351" width="150.500" height="53.500" fill="#ffffc6" stroke="#c0c0c0" stroke-width="2" />
					</g>
					<text class="note" x="1289" y="373" textLength="109">But it Tells You</text>
					<text class="note" x="1300" y="391" textLength="86">the Problem</text>
				</svg>
			</div>
		</section>
	</main>

	<footer class="status">
		<span class="hint">For Help, press F1</span>
		<span class="scale">1:20280</span>
		<span class="proj">SPCS ( NAD83_NSRS ) ( 1062615.96, 2702655.71 )</span>
		<span class="pos">41° 39' 16.0654" N, 70° 00' 45.6011" W</span>
	</footer>

	<div class="taskbar">
		<div class="start">
			<svg width="16" height="16"><path d="M0 2.300L6.700 1.400v6.200H0zM7.500 1.200L16 0v7.600H7.500zM0 8.400h6.700v6.200L0 13.700zM7.500 8.400H16V16l-8.500-1.200z" fill="#fff" /></svg>
		</div>
		<div class="cortana">
			<span class="ring"></span>
			<span class="ask">Ask me anything</span>
			<svg width="13" height="18"><path d="M3.500.5h6v11h-6zM.5 9v5.500h12V9M6.500 14v3M3.500 17.500h6" fill="none" stroke="#a5a5a5" /></svg>
		</div>
		<div class="app taskview">
			<svg width="20" height="14"><path d="M4.500.5h11v13h-11zM3 2.500H.5v9H3M17 2.500h2.500v9H17" fill="none" stroke="#fff" /></svg>
		</div>
		{#each apps as app}
			<div class="app {app.state ?? ''}"><svg width="24" height="24" viewBox="0 0 24 24">{@html app.svg}</svg></div>
		{/each}
		<div class="tray">
			<svg width="13" height="8"><path d="M.5 7l6-6 6 6" fill="none" stroke="#fff" stroke-width="1.300" /></svg>
			<svg width="17" height="12"><path d="M5.500 3.500h9v7h-9zM15 5.500h1.500v3H15" fill="none" stroke="#fff" /><path d="M7 5h6v4H7zM0 2h5v4L3 8H2L0 6zM1 0v2M4 0v2" fill="#fff" /></svg>
			<svg width="18" height="17"><path d="M4 12L12 1l3 1-8 12zM5 9q-6 1-4 5 3 3 6-2l3-4M9 13q5 2 7-4l-3 1" fill="none" stroke="#fff" stroke-width="1.300" /></svg>
			<svg width="23" height="13"><path d="M.5.5h22v12H.5z" fill="none" stroke="#fff" /><path d="M3 3.500h17M3 6.500h17" stroke="#fff" stroke-dasharray="2 1" /><path d="M5 9.500h13" stroke="#fff" /></svg>
			<div class="clock"><span>10:06 PM</span><span>3/31/2017</span></div>
			<svg class="notify" width="25" height="25"><path d="M0 2h16v12H7l-4 4v-4H0z" fill="#fff" /><path d="M3 5.500h10M3 8h10M3 10.500h10" stroke="#00120a" /><circle cx="16.500" cy="16.500" r="7.500" fill="#303331" stroke="#9a9d9b" /><text x="13.500" y="21" font-family="Open Sans" font-size="12" fill="#fff">1</text></svg>
			<span class="peek"></span>
		</div>
	</div>
</div>

<style>
	:global(body) {
		margin: 0;
		overflow: hidden;
	}

	.window {
		width: 1600px;
		height: 900px;
		display: flex;
		flex-direction: column;
		background: #cdd1da;
		font-family: 'Open Sans', 'Noto Sans', sans-serif;
		font-size: 12px;
		color: #000;
		white-space: nowrap;
		overflow: hidden;
	}

	.titlebar {
		height: 23px;
		display: flex;
		align-items: center;
		background: #fff;
		flex: none;
	}

	.logo {
		width: 16px;
		height: 16px;
		margin: 0 5px 2px 2px;
	}

	.title {
		letter-spacing: -0.32px;
	}

	.controls {
		margin: 0 19px 3px auto;
		display: flex;
		gap: 35px;
	}

	.menubar {
		height: 32px;
		flex: none;
		display: grid;
		grid-template-columns: 17px 33px 35px 39px 42px 56px 41px 49px 35px 60px;
		align-items: center;
		color: #4d525c;
		letter-spacing: -0.25px;
	}

	.grip {
		width: 2px;
		height: 22px;
		margin: 0 4px;
		flex: none;
		background: repeating-linear-gradient(#989eaa 0 2px, #f7f8fb 2px 3px, transparent 3px 4px);
		border-right: 1px solid #eef0f5;
		box-sizing: border-box;
	}

	.toolbars {
		display: flex;
		flex-direction: column;
		gap: 1px;
		height: 135px;
		flex: none;
	}

	.row {
		display: flex;
		gap: 2px;
		height: 33px;
	}

	.group {
		display: flex;
		align-items: center;
		box-sizing: border-box;
		height: 33px;
		background: linear-gradient(#ebeff7, #dfe3ec 50%, #d1d6e0);
		border-bottom: 1px solid #a9aeb8;
		border-radius: 3px;
		flex: none;
	}

	.row .btn,
	.row .combo,
	.row .sep {
		margin-top: 2px;
	}

	.btn {
		width: 30px;
		height: 30px;
		box-sizing: border-box;
		display: flex;
		align-items: center;
		justify-content: center;
		flex: none;
	}

	.btn.on {
		border: 1px solid #bd9a63;
		border-radius: 2px;
		background: linear-gradient(#fbc986, #fbb65c 45%, #ffe6a0);
	}

	.icon {
		width: 20px;
		height: 20px;
		overflow: visible;
	}

	.icon.dim {
		opacity: 0.55;
	}

	.sep {
		width: 1px;
		height: 18px;
		margin: 0 3px;
		background: #a7adb8;
		border-right: 1px solid #fff;
	}

	.more {
		width: 11px;
		height: 33px;
		margin-left: auto;
		box-sizing: border-box;
		padding: 6px 0 3px 2px;
		display: flex;
		flex-direction: column;
		justify-content: space-between;
		background: linear-gradient(#b7bbc4, #a5a9b2);
		border-radius: 0 3px 3px 0;
	}

	.btn:nth-last-child(2):has(+ .more) {
		margin-right: 2px;
	}

	.combo {
		height: 19px;
		box-sizing: border-box;
		margin: 0 2px;
		padding: 1px 1px 1px 3px;
		display: flex;
		background: #fff;
		line-height: 17px;
		font-size: 11.5px;
		letter-spacing: -0.23px;
		flex: none;
	}

	.combo i {
		width: 13px;
		margin-left: auto;
		display: flex;
		align-items: center;
		justify-content: center;
		background: #dde1e9;
	}

	main {
		height: 652px;
		display: flex;
		flex: none;
	}

	aside {
		width: 200px;
		height: 651px;
		box-sizing: border-box;
		display: flex;
		flex-direction: column;
		border: 1px solid #8f959f;
		background: #fff;
		flex: none;
	}

	.panel-title {
		height: 20px;
		display: flex;
		align-items: center;
		justify-content: space-between;
		padding: 0 5px 0 3px;
		background: #b5bcc8;
		color: #4b505a;
		letter-spacing: -0.27px;
		font-size: 11.5px;
	}

	.tree {
		flex: 1;
		padding-top: 1px;
	}

	.node {
		height: 18px;
		display: flex;
		align-items: center;
		padding-left: 30px;
		font-size: 11.5px;
		letter-spacing: -0.18px;
	}

	.node svg {
		flex: none;
	}

	.node span {
		line-height: 18px;
		padding-left: 2px;
		margin-left: 4px;
	}

	.node.root {
		padding-left: 7px;
	}

	.node.root span {
		margin-left: 18px;
	}

	.node .selected {
		background: #3399ff;
		color: #fff;
		flex: 1;
		overflow: hidden;
	}

	.hscroll {
		height: 15px;
		display: flex;
		background: #f0f0f0;
	}

	.hscroll b {
		width: 131px;
		margin-right: auto;
		background: #cdcdcd;
	}

	.views {
		flex: 1;
		min-width: 0;
		margin-left: 5px;
		display: flex;
		flex-direction: column;
	}

	.map {
		height: 38px;
		box-sizing: border-box;
		display: flex;
		background: linear-gradient(#fff 32px, #e8e8e8 32px 33px, #fff 33px);
		border-top: 2px solid #6d7077;
		border-left: 2px solid #6d7077;
		border-bottom: 1px solid #d0d0d0;
	}

	.scalebar {
		width: 434px;
		height: 30px;
		box-sizing: border-box;
		display: flex;
		justify-content: space-between;
		padding: 0 6px 0 10px;
		border: 2px solid #000;
		border-top: 0;
		border-left-width: 1px;
		font: 16px/28px 'Liberation Serif', serif;
	}

	.thumb {
		margin-left: 245px;
	}

	.profile-bar {
		height: 36px;
		box-sizing: border-box;
		display: flex;
		border-top: 2px solid #6d7077;
		border-left: 2px solid #6d7077;
		background: #cdd1da;
	}

	.profile-bar .group {
		height: 34px;
	}

	.profile-bar .first {
		width: 511px;
	}

	.profile-bar .first .grip {
		margin-right: 3px;
	}

	.profile-bar .second {
		width: 571px;
	}

	.chart {
		height: 578px;
		box-sizing: border-box;
		border-left: 3px solid #6b6b6b;
		border-top: 2px solid #6b6b6b;
		border-right: 4px solid #f5f5f5;
		border-bottom: 5px solid #f5f5f5;
		background: #808080;
	}

	.chart svg {
		display: block;
		border-bottom: 1px solid #5d5d5d;
	}

	.chart text {
		font: 16px 'Liberation Serif', serif;
	}

	.chart .cy {
		fill: #88ffff;
	}

	.chart .red {
		fill: #f00000;
	}

	.chart .note {
		font: bold 14.5px 'Liberation Sans', sans-serif;
	}

	.gridline {
		stroke: #88ffff;
		stroke-dasharray: 9 6 3 6;
	}

	.status {
		height: 18px;
		flex: none;
		display: flex;
		align-items: center;
		background: linear-gradient(#dde0e6, #c4c8d0 40%, #a7acb5 45%, #b8bcc4);
		color: #22262d;
		font-size: 11.5px;
		letter-spacing: -0.3px;
	}

	.status span {
		box-sizing: border-box;
		padding: 1px 0 0 4px;
		border-left: 1px solid #848993;
		line-height: 17px;
	}

	.status .hint {
		width: 1109px;
		border: 0;
		letter-spacing: -0.2px;
	}

	.status .scale {
		width: 45px;
	}

	.status .proj {
		width: 248px;
	}

	.status .pos {
		width: 198px;
	}

	.taskbar {
		height: 40px;
		flex: none;
		display: flex;
		background: #00120a;
		color: #fff;
	}

	.start {
		width: 48px;
		display: flex;
		align-items: center;
		justify-content: center;
	}

	.cortana {
		width: 342px;
		box-sizing: border-box;
		padding: 0 12px 0 9px;
		display: flex;
		align-items: center;
		background: #333;
		color: #a0a0a0;
		margin-right: 1px;
		border-right: 1px solid #333;
		width: 344px;
	}

	.ring {
		width: 21px;
		height: 21px;
		box-sizing: border-box;
		border: 3px solid #fff;
		border-radius: 50%;
	}

	.ask {
		margin: 0 auto 0 6px;
		font-size: 15px;
		letter-spacing: -0.4px;
	}

	.app {
		width: 49px;
		box-sizing: border-box;
		display: flex;
		align-items: center;
		justify-content: center;
		flex: none;
	}

	.taskview {
		margin-right: 1px;
	}

	.open {
		box-shadow: inset 0 -2px #76a9ea;
		clip-path: inset(0 4px);
	}

	.active {
		background: #36463f;
		clip-path: none;
	}

	.tray {
		flex: 1;
		display: flex;
		align-items: center;
		padding-left: 101px;
		gap: 11px;
	}

	.clock {
		display: flex;
		flex-direction: column;
		align-items: center;
		width: 60px;
		margin-left: -5px;
		font-size: 12px;
		line-height: 18px;
		letter-spacing: -0.3px;
	}

	.notify {
		margin-left: 2px;
		flex: none;
	}

	.peek {
		width: 1px;
		height: 40px;
		margin: 0 4px 0 auto;
		background: #4c5853;
	}
</style>
